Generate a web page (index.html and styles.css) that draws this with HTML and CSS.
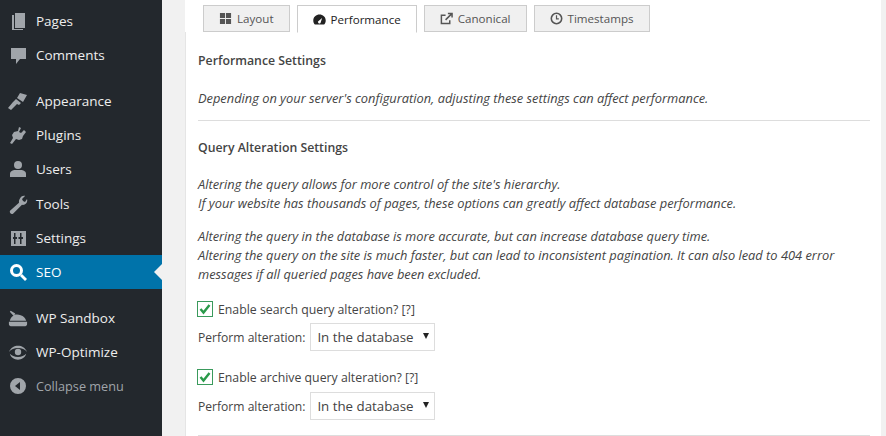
FILE: index.html
```html
<!DOCTYPE html>
<html lang="en">
<head>
<meta charset="utf-8">
<title>SEO Performance</title>
<link rel="stylesheet" href="styles.css">
</head>
<body>
<div class="app">
<nav class="side">
  <a class="item"><svg class="ico" viewBox="0 0 20 20"><path d="M7 2h10v15H7z"/><path d="M4 4h2v14h9v1H4z"/></svg><span>Pages</span></a>
  <a class="item"><svg class="ico" viewBox="0 0 20 20"><path d="M3 3h15v11h-6l-4 5v-5H3z"/></svg><span>Comments</span></a>
  <a class="item i-gap"><svg class="ico" viewBox="0 0 20 20"><path d="M12 2l7 2-4 7-6-4zM8 8l5 4-2 2-2-1-6 6-3-2 5-6z"/></svg><span>Appearance</span></a>
  <a class="item"><svg class="ico" viewBox="0 0 20 20"><path d="M11 2l2 1-2 4 2 1 3-3 2 2-3 4-1 3-3 1-3-1-4 5-2-1 3-5-1-3 2-3 4-1z"/></svg><span>Plugins</span></a>
  <a class="item"><svg class="ico" viewBox="0 0 20 20"><circle cx="10" cy="6" r="4"/><path d="M2 18v-3c0-3 3-4 5-4h6c2 0 5 1 5 4v3z"/></svg><span>Users</span></a>
  <a class="item"><svg class="ico" viewBox="0 0 20 20"><path d="M17 2l-3 3 1 2 2 1 2-3c1 3-1 6-4 6l-1-.2-9 9c-1 1-4-1-3-3l9-8c-.5-3 2-8 6-7z"/></svg><span>Tools</span></a>
  <a class="item"><svg class="ico" viewBox="0 0 20 20"><path fill-rule="evenodd" d="M3 3h15v15H3zM6 5v4H5v2h1v5h1.500v-5H9V9H7.500V5zM12 5v4h-1.500v2H12v5h1.500v-5H15V9h-1.500V5z"/></svg><span>Settings</span></a>
  <a class="item active"><svg class="ico" viewBox="0 0 20 20"><circle cx="8.500" cy="8.500" r="5" fill="none" stroke="#fff" stroke-width="3"/><path d="M12 14l2-2 5 5-2 2z"/></svg><span>SEO</span></a>
  <a class="item i-gap"><svg class="ico" viewBox="0 0 22 20"><path d="M3 2l5 3-1 1.500C9 6 12 6 14 7c3 1 5 3 6 6H2c.5-2.500 2-4.500 4-5.500L2 3zM1 14h20v3c0 1-1 2-2 2H3c-1 0-2-1-2-2z"/></svg><span>WP Sandbox</span></a>
  <a class="item"><svg class="ico" viewBox="0 0 22 20"><circle cx="11" cy="10" r="3.500"/><path d="M1 10c2-5 6-7 10-7s8 2 10 7c-2-3-6-4.500-10-4.500S3 7 1 10zM2 12c2 2 5 3.500 9 3.500s7-1.500 9-3.500c-1 4-5 6.500-9 6.500S3 16 2 12z"/></svg><span>WP-Optimize</span></a>
  <a class="item collapse"><svg class="ico" viewBox="0 0 20 20"><path fill-rule="evenodd" d="M10 2a8 8 0 110 16 8 8 0 010-16zM12 6l-5 4 5 4z"/></svg><span>Collapse menu</span></a>
</nav>
<main class="main">
  <div class="tabs">
    <a class="tab"><svg class="tico" viewBox="0 0 14 14"><path d="M1 1h5.500v5.500H1zM7.500 1H13v5.500H7.500zM1 7.500h5.500V13H1zM7.500 7.500H13V13H7.500z"/></svg>Layout</a>
    <a class="tab on"><svg class="tico" viewBox="0 0 14 14"><path fill-rule="evenodd" d="M7 1.500c3.600 0 6.700 2.700 6.700 6.500 0 1.700-.6 3.300-1.700 4.500H2C.9 11.300.3 9.700.3 8 .3 4.200 3.400 1.500 7 1.500zM9.800 5.500L6.300 8.300a1.500 1.500 0 101.900 2.100z"/></svg>Performance</a>
    <a class="tab"><svg class="tico" viewBox="0 0 14 14"><path fill="none" stroke="currentColor" stroke-width="1.600" d="M6 3.500H1.500v9h9V9M6 8.500L12.500 2M8.500 1.500h4.500V6"/></svg>Canonical</a>
    <a class="tab"><svg class="tico" viewBox="0 0 14 14"><circle cx="7" cy="7" r="5.600" fill="none" stroke="currentColor" stroke-width="1.700"/><path fill="none" stroke="currentColor" stroke-width="1.300" d="M7 3.500V7.500H9.500"/></svg>Timestamps</a>
  </div>
  <section class="panel">
    <h3 class="h h-first">Performance Settings</h3>
    <p class="note n1">Depending on your server's configuration, adjusting these settings can affect performance.</p>
    <hr class="rule">
    <h3 class="h">Query Alteration Settings</h3>
    <p class="note n2">Altering the query allows for more control of the site's hierarchy.<br>If your website has thousands of pages, these options can greatly affect database performance.</p>
    <p class="note n3">Altering the query in the database is more accurate, but can increase database query time.<br>Altering the query on the site is much faster, but can lead to inconsistent pagination. It can also lead to 404 error<br>messages if all queried pages have been excluded.</p>
    <div class="check"><span class="box"><svg viewBox="0 0 14 14"><path d="M2.500 7l3 3.500L11.500 3" fill="none" stroke="#2a9a4a" stroke-width="2.400"/></svg></span>Enable search query alteration? [?]</div>
    <div class="sel-row">Perform alteration:<span class="select">In the database<i class="caret"></i></span></div>
    <div class="check c2"><span class="box"><svg viewBox="0 0 14 14"><path d="M2.500 7l3 3.500L11.500 3" fill="none" stroke="#2a9a4a" stroke-width="2.400"/></svg></span>Enable archive query alteration? [?]</div>
    <div class="sel-row s2">Perform alteration:<span class="select">In the database<i class="caret"></i></span></div>
    <hr class="rule r2">
  </section>
</main>
</div>
</body>
</html>
```
FILE: styles.css
```css
html,body{margin:0;padding:0;height:436px;overflow:hidden;background:#f1f1f1}
body{font-family:"Open Sans","Noto Sans",sans-serif;font-size:12.300px;color:#444}
.app{display:flex;height:436px}
.side{width:162px;flex:none;background:#23282d;padding-top:4px;box-sizing:border-box}
.item{display:flex;align-items:center;height:34.300px;color:#eee;font-size:13.500px;box-sizing:border-box;padding-left:8px}
.item span{margin-left:8px}
.ico{width:20px;height:20px;fill:#a0a5aa;flex:none}
.i-gap{margin-top:11px}
.active{background:#0073aa;color:#fff;position:relative}
.active .ico{fill:#fff}
.active::after{content:"";position:absolute;right:0;top:9px;border:8px solid transparent;border-right-color:#f1f1f1;border-left-width:0}
.collapse{color:#a0a5aa;font-size:12.700px}
.main{flex:1;padding:0 5px 0 23px;min-width:0}
.tabs{display:flex;gap:7px;padding:5px 0 0 18px;height:33px;box-sizing:border-box;border-bottom:1px solid #ccc;margin-bottom:-1px;background:#fff}
.tab{display:flex;align-items:center;gap:5px;height:27px;border:1px solid #ccc;box-sizing:border-box;padding:0 15px;background:#f0f0f0;color:#555;font-size:11.600px;font-weight:500}
.tab.on{background:#fff;border-bottom-color:#fff;color:#222;height:28px}
.tico{width:13px;height:13px;fill:currentColor;flex:none}
.panel{background:#fff;border-left:1px solid #e5e5e5;padding:0 11px 0 12px;height:404px;box-sizing:border-box;overflow:hidden}
.h{font-size:12.300px;font-weight:600;margin:0;color:#444;line-height:18px}
.h-first{padding-top:20px}
.note{font-style:italic;margin:0;line-height:19px;font-size:12.840px;color:#444}
.n1{margin-top:19px}
.rule{border:0;border-top:1px solid #ddd;margin:12px 0 0}
.n2{margin-top:18px}
.n3{margin-top:14px}
.h:not(.h-first){margin-top:18px}
.check{display:flex;align-items:center;margin-top:15px;height:20px}
.c2{margin-top:16px}
.box{width:14px;height:14px;border:1px solid #3a9a5c;margin:0 5px 0 -1px;flex:none;box-sizing:content-box}
.box svg{display:block;width:14px;height:14px}
.sel-row{display:flex;align-items:center;gap:5px;margin-top:4px;height:28px;font-size:12.100px}
.s2{margin-top:5px}
.select{display:flex;align-items:center;width:125px;height:28px;box-sizing:border-box;border:1px solid #ddd;padding-left:6px;position:relative;font-size:13.300px}
.caret{position:absolute;right:5px;top:9px;border:3.500px solid transparent;border-top:6px solid #222;border-bottom:0}
.r2{margin-top:15px}
```
